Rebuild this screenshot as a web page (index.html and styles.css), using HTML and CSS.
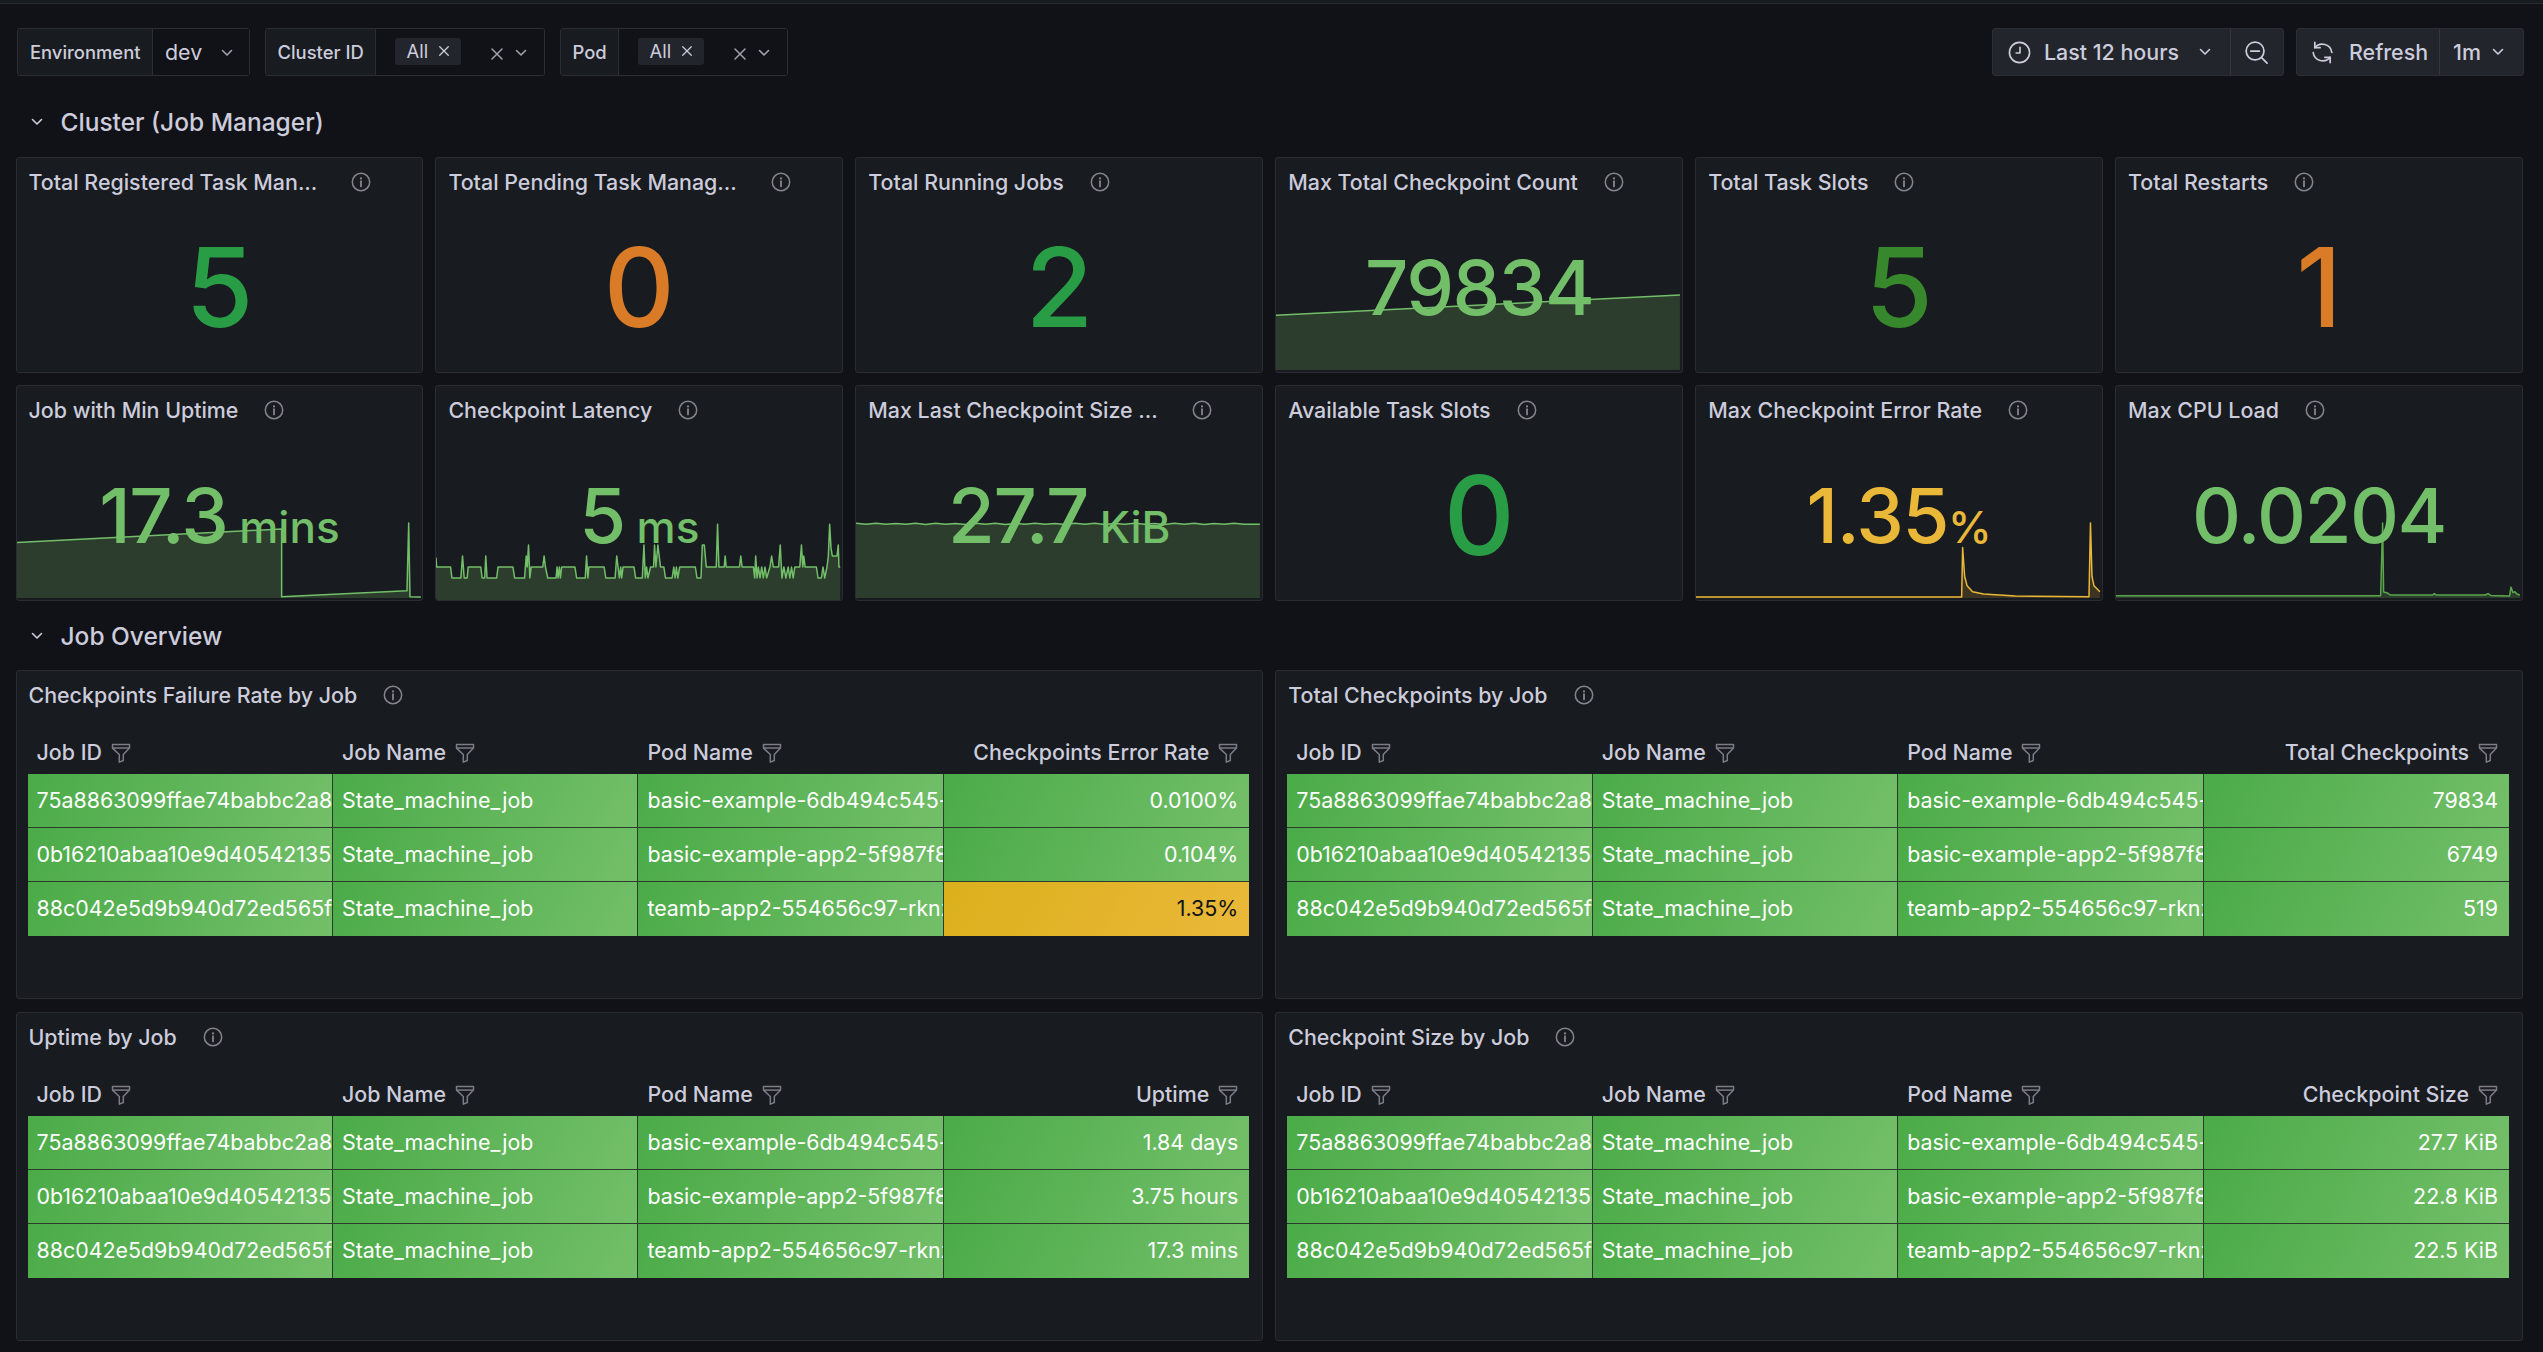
FILE: index.html
```html
<!DOCTYPE html>
<html lang="en">
<head>
<meta charset="utf-8">
<title>Flink Dashboard</title>
<link rel="stylesheet" href="styles.css">
</head>
<body>
<svg class="defs" width="0" height="0" aria-hidden="true">
  <symbol id="i-info" viewBox="0 0 20 20"><circle cx="10" cy="10" r="8.7" fill="none" stroke="currentColor" stroke-width="1.5"/><circle cx="10" cy="6.4" r="1.1" fill="currentColor"/><path d="M10 9.2v5.2" stroke="currentColor" stroke-width="1.8" stroke-linecap="round"/></symbol>
  <symbol id="i-chev" viewBox="0 0 12 8"><path d="M1.5 1.5 6 6l4.5-4.5" fill="none" stroke="currentColor" stroke-width="1.6" stroke-linecap="round" stroke-linejoin="round"/></symbol>
  <symbol id="i-x" viewBox="0 0 14 14"><path d="M2 2l10 10M12 2 2 12" fill="none" stroke="currentColor" stroke-width="1.5" stroke-linecap="round"/></symbol>
  <symbol id="i-funnel" viewBox="0 0 20 20"><path d="M1.5 1.5h17v3.6l-6.2 6.4v6l-4 1.6v-7.6L1.5 5.1z" fill="none" stroke="currentColor" stroke-width="1.5" stroke-linejoin="round"/><path d="M2 5.1h16" stroke="currentColor" stroke-width="1.5"/></symbol>
  <symbol id="i-clock" viewBox="0 0 24 24"><circle cx="12" cy="12" r="10.5" fill="none" stroke="currentColor" stroke-width="1.7"/><path d="M12.5 6.5v6H8.5" fill="none" stroke="currentColor" stroke-width="1.7" stroke-linecap="round" stroke-linejoin="round"/></symbol>
  <symbol id="i-zoom" viewBox="0 0 24 24"><circle cx="10.5" cy="10.5" r="9.3" fill="none" stroke="currentColor" stroke-width="1.8"/><path d="M6 10.5h9M17.3 17.3 23 23" fill="none" stroke="currentColor" stroke-width="1.8" stroke-linecap="round"/></symbol>
  <symbol id="i-sync" viewBox="0 0 24 24"><path d="M4 7A10 10 0 0 1 21.7 12M2.3 12A10 10 0 0 0 20 17" fill="none" stroke="currentColor" stroke-width="1.8" stroke-linecap="round"/><path d="M4 1.5V7h5.5M20 22.5V17h-5.500" fill="none" stroke="currentColor" stroke-width="1.8" stroke-linecap="round" stroke-linejoin="round"/></symbol>
</svg>
<div class="topline"></div>
<main class="page">
  <div class="toolbar">
    <div class="filters">
      <div class="filter">
        <div class="f-label f-env">Environment</div>
        <div class="f-value v-env"><span class="f-text">dev</span><svg class="chev"><use href="#i-chev"/></svg></div>
      </div>
      <div class="filter">
        <div class="f-label f-cluster">Cluster ID</div>
        <div class="f-value v-cluster"><span class="chip">All<svg class="chip-x"><use href="#i-x"/></svg></span><svg class="clear"><use href="#i-x"/></svg><svg class="chev"><use href="#i-chev"/></svg></div>
      </div>
      <div class="filter">
        <div class="f-label f-pod">Pod</div>
        <div class="f-value v-pod"><span class="chip">All<svg class="chip-x"><use href="#i-x"/></svg></span><svg class="clear"><use href="#i-x"/></svg><svg class="chev"><use href="#i-chev"/></svg></div>
      </div>
    </div>
    <div class="actions">
      <div class="btn-group">
        <div class="btn b-time"><svg class="b-icon"><use href="#i-clock"/></svg><span>Last 12 hours</span><svg class="chev b-chev"><use href="#i-chev"/></svg></div>
        <div class="btn b-zoom"><svg class="b-icon"><use href="#i-zoom"/></svg></div>
      </div>
      <div class="btn-group">
        <div class="btn b-refresh"><svg class="b-icon"><use href="#i-sync"/></svg><span>Refresh</span></div>
        <div class="btn b-interval"><span>1m</span><svg class="chev b-chev"><use href="#i-chev"/></svg></div>
      </div>
    </div>
  </div>

  <h2 class="section s-first"><svg class="sec-chev"><use href="#i-chev"/></svg>Cluster (Job Manager)</h2>
  <div class="stats">
    <section class="panel">
      <header class="p-title"><span>Total Registered Task Man...</span><svg class="info gap-wide"><use href="#i-info"/></svg></header>
      <div class="val big c-green">5</div>
    </section>
    <section class="panel">
      <header class="p-title"><span>Total Pending Task Manag...</span><svg class="info gap-wide"><use href="#i-info"/></svg></header>
      <div class="val big c-orange">0</div>
    </section>
    <section class="panel">
      <header class="p-title"><span>Total Running Jobs</span><svg class="info"><use href="#i-info"/></svg></header>
      <div class="val big c-green">2</div>
    </section>
    <section class="panel">
      <svg class="spark" viewBox="0 0 408 216" preserveAspectRatio="none"><polygon class="fill-g" points="0,158.7 406,138.3 406,214 0,214"/><polyline class="line-g" points="0,158.7 406,138.3"/></svg>
      <header class="p-title"><span>Max Total Checkpoint Count</span><svg class="info"><use href="#i-info"/></svg></header>
      <div class="val mid c-lime">79834</div>
    </section>
    <section class="panel">
      <header class="p-title"><span>Total Task Slots</span><svg class="info"><use href="#i-info"/></svg></header>
      <div class="val big c-dgreen">5</div>
    </section>
    <section class="panel">
      <header class="p-title"><span>Total Restarts</span><svg class="info"><use href="#i-info"/></svg></header>
      <div class="val big c-orange">1</div>
    </section>

    <section class="panel">
      <svg class="spark" viewBox="0 0 408 216" preserveAspectRatio="none"><polygon class="fill-g" points="0,158 266,144.3 266,212.7 392,206.7 393.7,138.3 395,212.7 406,213 406,214 0,214"/><polyline class="line-g" points="0,158 266,144.3 266,212.7 392,206.7 393.7,138.3 395,212.7 406,213"/></svg>
      <header class="p-title"><span>Job with Min Uptime</span><svg class="info"><use href="#i-info"/></svg></header>
      <div class="val mid c-lime">17.3<span class="unit"> mins</span></div>
    </section>
    <section class="panel">
      <svg class="spark spark-lat" viewBox="3 0 1224 273" preserveAspectRatio="none"><polygon class="fill-g" points="3,140 5,168 47,168 51,201 78,201 83,135 88,201 97,201 100,168 138,168 142,201 150,201 153,135 157,201 186,201 190,168 235,168 240,201 270,201 275,135 278,168 282,102 286,201 290,168 325,168 329,135 333,168 340,201 365,201 368,168 371,201 375,168 378,201 382,168 422,168 427,201 453,201 457,135 461,201 464,168 510,168 515,201 543,201 548,135 552,168 556,201 560,168 563,201 567,168 600,168 605,201 625,201 630,102 634,201 638,168 642,201 650,168 659,168 662,102 666,168 672,102 680,168 690,168 695,201 715,201 720,168 724,201 728,168 732,201 738,168 785,168 790,201 802,201 806,102 812,102 818,168 848,168 852,40 856,168 872,168 875,135 878,168 918,168 922,135 926,168 960,168 964,201 967,135 971,201 975,168 980,201 985,168 990,201 995,168 1000,201 1010,168 1015,135 1020,168 1036,168 1041,102 1046,201 1052,168 1058,201 1065,168 1070,201 1075,168 1080,201 1085,168 1100,168 1105,102 1109,168 1112,135 1116,168 1150,168 1155,201 1165,201 1170,168 1175,201 1182,168 1186,135 1190,40 1194,110 1198,135 1212,135 1216,102 1218,168 1222,168 1222,268 3,268"/><polyline class="line-g" points="3,140 5,168 47,168 51,201 78,201 83,135 88,201 97,201 100,168 138,168 142,201 150,201 153,135 157,201 186,201 190,168 235,168 240,201 270,201 275,135 278,168 282,102 286,201 290,168 325,168 329,135 333,168 340,201 365,201 368,168 371,201 375,168 378,201 382,168 422,168 427,201 453,201 457,135 461,201 464,168 510,168 515,201 543,201 548,135 552,168 556,201 560,168 563,201 567,168 600,168 605,201 625,201 630,102 634,201 638,168 642,201 650,168 659,168 662,102 666,168 672,102 680,168 690,168 695,201 715,201 720,168 724,201 728,168 732,201 738,168 785,168 790,201 802,201 806,102 812,102 818,168 848,168 852,40 856,168 872,168 875,135 878,168 918,168 922,135 926,168 960,168 964,201 967,135 971,201 975,168 980,201 985,168 990,201 995,168 1000,201 1010,168 1015,135 1020,168 1036,168 1041,102 1046,201 1052,168 1058,201 1065,168 1070,201 1075,168 1080,201 1085,168 1100,168 1105,102 1109,168 1112,135 1116,168 1150,168 1155,201 1165,201 1170,168 1175,201 1182,168 1186,135 1190,40 1194,110 1198,135 1212,135 1216,102 1218,168 1222,168"/></svg>
      <header class="p-title"><span>Checkpoint Latency</span><svg class="info"><use href="#i-info"/></svg></header>
      <div class="val mid c-lime">5<span class="unit"> ms</span></div>
    </section>
    <section class="panel">
      <svg class="spark" viewBox="0 0 408 216" preserveAspectRatio="none"><polygon class="fill-g" points="0,139 406,139 406,214 0,214"/><polyline class="line-g" points="0,138.5 10,139.5 20,138.5 30,139.5 40,138.8 50,139.5 60,138.5 70,139.8 80,138.5 90,139.5 100,138.8 110,139.8 120,138.5 130,139.5 140,138.5 150,139.8 160,138.8 170,139.5 180,138.5 190,139.5 200,138.8 210,139.8 220,138.5 230,139.5 240,138.5 250,139.8 260,138.8 270,139.5 280,138.5 290,139.5 300,138.8 310,139.8 320,138.5 330,139.5 340,138.5 350,139.8 360,138.8 370,139.5 380,138.5 390,139.5 406,139.5"/></svg>
      <header class="p-title"><span>Max Last Checkpoint Size ...</span><svg class="info gap-wide"><use href="#i-info"/></svg></header>
      <div class="val mid c-lime">27.7<span class="unit"> KiB</span></div>
    </section>
    <section class="panel">
      <header class="p-title"><span>Available Task Slots</span><svg class="info"><use href="#i-info"/></svg></header>
      <div class="val big c-green">0</div>
    </section>
    <section class="panel">
      <svg class="spark" viewBox="0 0 408 216" preserveAspectRatio="none"><polygon class="fill-y" points="0,213 267,213 268,163 270,192 272.5,201.7 278,207.7 289,210 321,212 395,212.7 396.5,138.3 398,192 400,201.7 406,207.7 406,214 0,214"/><polyline class="line-y" points="0,213 267,213 268,163 270,192 272.5,201.7 278,207.7 289,210 321,212 395,212.7 396.5,138.3 398,192 400,201.7 406,207.7"/></svg>
      <header class="p-title"><span>Max Checkpoint Error Rate</span><svg class="info"><use href="#i-info"/></svg></header>
      <div class="val mid c-yellow">1.35<span class="unit">%</span></div>
    </section>
    <section class="panel">
      <svg class="spark" viewBox="0 0 408 216" preserveAspectRatio="none"><polygon class="fill-g" points="0,211.7 266,211.7 268,138.3 269,208 273,209 276,211 318,211 320,209.5 322,211 371,211 374,209.5 377,211.5 395.6,212 397,203 399,208.5 401,207.7 403,210 406,211 406,214 0,214"/><polyline class="line-d" points="0,211.7 266,211.7 268,138.3 269,208 273,209 276,211 318,211 320,209.5 322,211 371,211 374,209.5 377,211.5 395.6,212 397,203 399,208.5 401,207.7 403,210 406,211"/></svg>
      <header class="p-title"><span>Max CPU Load</span><svg class="info"><use href="#i-info"/></svg></header>
      <div class="val mid c-lime">0.0204</div>
    </section>
  </div>

  <h2 class="section s-second"><svg class="sec-chev"><use href="#i-chev"/></svg>Job Overview</h2>
  <div class="tables">
    <section class="panel t-panel">
      <header class="p-title t-title"><span>Checkpoints Failure Rate by Job</span><svg class="info"><use href="#i-info"/></svg></header>
      <div class="tbl">
        <div class="th">Job ID<svg class="funnel"><use href="#i-funnel"/></svg></div>
        <div class="th">Job Name<svg class="funnel"><use href="#i-funnel"/></svg></div>
        <div class="th">Pod Name<svg class="funnel"><use href="#i-funnel"/></svg></div>
        <div class="th num">Checkpoints Error Rate<svg class="funnel"><use href="#i-funnel"/></svg></div>
        <div class="td">75a8863099ffae74babbc2a8f1c3</div><div class="td">State_machine_job</div><div class="td">basic-example-6db494c545-xk2v9</div><div class="td num">0.0100%</div>
        <div class="td">0b16210abaa10e9d40542135c7e2</div><div class="td">State_machine_job</div><div class="td">basic-example-app2-5f987f8c6d-q</div><div class="td num">0.104%</div>
        <div class="td">88c042e5d9b940d72ed565fa09b1</div><div class="td">State_machine_job</div><div class="td">teamb-app2-554656c97-rknzt</div><div class="td num warn">1.35%</div>
      </div>
    </section>
    <section class="panel t-panel">
      <header class="p-title t-title"><span>Total Checkpoints by Job</span><svg class="info"><use href="#i-info"/></svg></header>
      <div class="tbl">
        <div class="th">Job ID<svg class="funnel"><use href="#i-funnel"/></svg></div>
        <div class="th">Job Name<svg class="funnel"><use href="#i-funnel"/></svg></div>
        <div class="th">Pod Name<svg class="funnel"><use href="#i-funnel"/></svg></div>
        <div class="th num">Total Checkpoints<svg class="funnel"><use href="#i-funnel"/></svg></div>
        <div class="td">75a8863099ffae74babbc2a8f1c3</div><div class="td">State_machine_job</div><div class="td">basic-example-6db494c545-xk2v9</div><div class="td num">79834</div>
        <div class="td">0b16210abaa10e9d40542135c7e2</div><div class="td">State_machine_job</div><div class="td">basic-example-app2-5f987f8c6d-q</div><div class="td num">6749</div>
        <div class="td">88c042e5d9b940d72ed565fa09b1</div><div class="td">State_machine_job</div><div class="td">teamb-app2-554656c97-rknzt</div><div class="td num">519</div>
      </div>
    </section>
    <section class="panel t-panel">
      <header class="p-title t-title"><span>Uptime by Job</span><svg class="info"><use href="#i-info"/></svg></header>
      <div class="tbl">
        <div class="th">Job ID<svg class="funnel"><use href="#i-funnel"/></svg></div>
        <div class="th">Job Name<svg class="funnel"><use href="#i-funnel"/></svg></div>
        <div class="th">Pod Name<svg class="funnel"><use href="#i-funnel"/></svg></div>
        <div class="th num">Uptime<svg class="funnel"><use href="#i-funnel"/></svg></div>
        <div class="td">75a8863099ffae74babbc2a8f1c3</div><div class="td">State_machine_job</div><div class="td">basic-example-6db494c545-xk2v9</div><div class="td num">1.84 days</div>
        <div class="td">0b16210abaa10e9d40542135c7e2</div><div class="td">State_machine_job</div><div class="td">basic-example-app2-5f987f8c6d-q</div><div class="td num">3.75 hours</div>
        <div class="td">88c042e5d9b940d72ed565fa09b1</div><div class="td">State_machine_job</div><div class="td">teamb-app2-554656c97-rknzt</div><div class="td num">17.3 mins</div>
      </div>
    </section>
    <section class="panel t-panel">
      <header class="p-title t-title"><span>Checkpoint Size by Job</span><svg class="info"><use href="#i-info"/></svg></header>
      <div class="tbl">
        <div class="th">Job ID<svg class="funnel"><use href="#i-funnel"/></svg></div>
        <div class="th">Job Name<svg class="funnel"><use href="#i-funnel"/></svg></div>
        <div class="th">Pod Name<svg class="funnel"><use href="#i-funnel"/></svg></div>
        <div class="th num">Checkpoint Size<svg class="funnel"><use href="#i-funnel"/></svg></div>
        <div class="td">75a8863099ffae74babbc2a8f1c3</div><div class="td">State_machine_job</div><div class="td">basic-example-6db494c545-xk2v9</div><div class="td num">27.7 KiB</div>
        <div class="td">0b16210abaa10e9d40542135c7e2</div><div class="td">State_machine_job</div><div class="td">basic-example-app2-5f987f8c6d-q</div><div class="td num">22.8 KiB</div>
        <div class="td">88c042e5d9b940d72ed565fa09b1</div><div class="td">State_machine_job</div><div class="td">teamb-app2-554656c97-rknzt</div><div class="td num">22.5 KiB</div>
      </div>
    </section>
  </div>
</main>
</body>
</html>
```
FILE: styles.css
```css
* { box-sizing: border-box; }
html, body { margin: 0; height: 100%; }
body {
  background: #111217;
  color: #ccccdc;
  font-family: Inter, "Liberation Sans", sans-serif;
  font-size: 21.4px;
  overflow: hidden;
}
.defs { position: absolute; }
.topline { height: 4px; border-bottom: 1px solid #2a2c32; background: #181b1f; }
.page { padding: 24px 20px 0 15.5px; }

.toolbar { display: flex; justify-content: space-between; height: 48px; margin-right: -1px; }
.filters { display: flex; gap: 14.5px; padding-left: 1.5px; }
.filter { display: flex; height: 48px; border: 1px solid #2c2e34; border-radius: 3px; overflow: hidden; }
.f-label {
  display: flex; align-items: center; background: #181b1f; border-right: 1px solid #2c2e34;
  padding-left: 12px; font-size: 18.4px; font-weight: 500;
}
.f-env { width: 135px; }
.f-cluster { width: 110px; }
.f-pod { width: 58px; }
.f-value { display: flex; align-items: center; background: #111217; position: relative; }
.v-env { width: 96px; padding-left: 12px; }
.v-cluster { width: 168.5px; padding-left: 19px; }
.v-pod { width: 168px; padding-left: 19px; }
.f-text { font-size: 21.4px; }
.chip {
  display: flex; align-items: center; width: 66px; height: 27px; padding-left: 12px;
  background: #22252b; border-radius: 3px; font-size: 18.4px; margin-top: -2px;
}
.chip-x { width: 12px; height: 12px; margin-left: 10px; }
.clear { width: 14px; height: 14px; margin-left: 29px; color: #a0a1ab; margin-top: 3px; }
.chev { width: 12px; height: 8px; color: #a0a1ab; margin-left: 11px; flex: none; margin-top: 2px; }
.v-env .chev { margin-left: 19px; }

.actions { display: flex; gap: 12px; }
.btn-group { display: flex; height: 48px; background: #22252b; border: 1px solid #2c2e34; border-radius: 3px; }
.btn { display: flex; align-items: center; font-weight: 500; font-size: 21.4px; }
.b-icon { width: 23px; height: 23px; flex: none; }
.b-time { width: 238px; padding-left: 15px; gap: 13px; border-right: 1px solid #34363c; }
.b-zoom { width: 52px; padding-left: 14px; }
.b-refresh { width: 143px; padding-left: 14px; gap: 15px; border-right: 1px solid #34363c; }
.b-interval { width: 83px; padding-left: 13px; }
.b-chev { margin-left: auto; margin-right: 19px; color: #ccccdc; margin-top: 0; }

.section {
  display: flex; align-items: center; margin: 0; font-size: 24.5px; font-weight: 500; padding-left: 15px;
}
.s-first { height: 81px; padding-top: 11px; }
.s-second { height: 69px; }
.sec-chev { width: 12px; height: 8px; margin-right: 18px; flex: none; }

.stats { display: grid; grid-template-columns: repeat(6, minmax(0, 1fr)); grid-auto-rows: 216px; gap: 12px; }
.tables { display: grid; grid-template-columns: repeat(2, minmax(0, 1fr)); grid-auto-rows: 329px; gap: 13px 12px; }
.panel {
  position: relative; background: #181b1f; border: 1px solid #2a2c32; border-radius: 3px; overflow: hidden;
}
.p-title {
  position: relative; display: flex; align-items: center; height: 48px; padding-left: 12px;
  font-size: 21.4px; font-weight: 500; white-space: nowrap;
}
.info { width: 20px; height: 20px; margin-left: 26px; color: #85858f; flex: none; }
.gap-wide { margin-left: 34px; }

.spark { position: absolute; left: 0; top: 0; width: 100%; height: 100%; }
.spark-lat { top: 125px; height: 91px; }
.spark polyline { fill: none; stroke-width: 1.5; vector-effect: non-scaling-stroke; stroke-linejoin: round; }
.fill-g { fill: #2c3d2e; }
.fill-y { fill: #3d3522; }
.line-g { stroke: #73bf69; }
.line-d { stroke: #5aa64b; }
.line-y { stroke: #eab839; }

.val { position: relative; text-align: center; font-weight: 500; white-space: nowrap; }
.big { font-size: 110px; line-height: 110px; margin-top: 26px; }
.mid { font-size: 76px; line-height: 76px; margin-top: 43px; letter-spacing: -1.5px; }
.unit { font-size: 44px; letter-spacing: 0; }
.c-green { color: #299c46; }
.c-dgreen { color: #37872d; }
.c-orange { color: #d97b27; }
.c-lime { color: #73bf69; }
.c-yellow { color: #eab839; }

.t-panel { padding: 0 13px 0 11px; }
.t-title { padding-left: 1px; }
.tbl { display: grid; grid-template-columns: repeat(4, minmax(0, 1fr)); grid-template-rows: repeat(4, 54px); margin-top: 1px; }
.th { display: flex; align-items: center; padding: 10px 11px 0 9px; font-size: 21.4px; font-weight: 500; white-space: nowrap; height: 54px; }
.funnel { width: 20px; height: 20px; margin-left: 9px; color: #7c7c87; flex: none; margin-top: 2px; }
.th.num { justify-content: flex-end; }
.td {
  display: block; padding: 0 0 0 9px; line-height: 53px; height: 54px; font-size: 21.4px; color: #fff;
  background: linear-gradient(120deg, #4bab48, #73bf69); white-space: nowrap; overflow: hidden;
  border-right: 1px solid #2d3a2e; border-bottom: 1px solid #2d3a2e;
}
.td:nth-child(4n) { border-right: 0; }
.td:nth-last-child(-n+4) { border-bottom: 0; }
.td.num { text-align: right; padding: 0 11px 0 0; }
.td.warn { background: linear-gradient(120deg, #dbb01c, #eab839); color: #111217; }
```
